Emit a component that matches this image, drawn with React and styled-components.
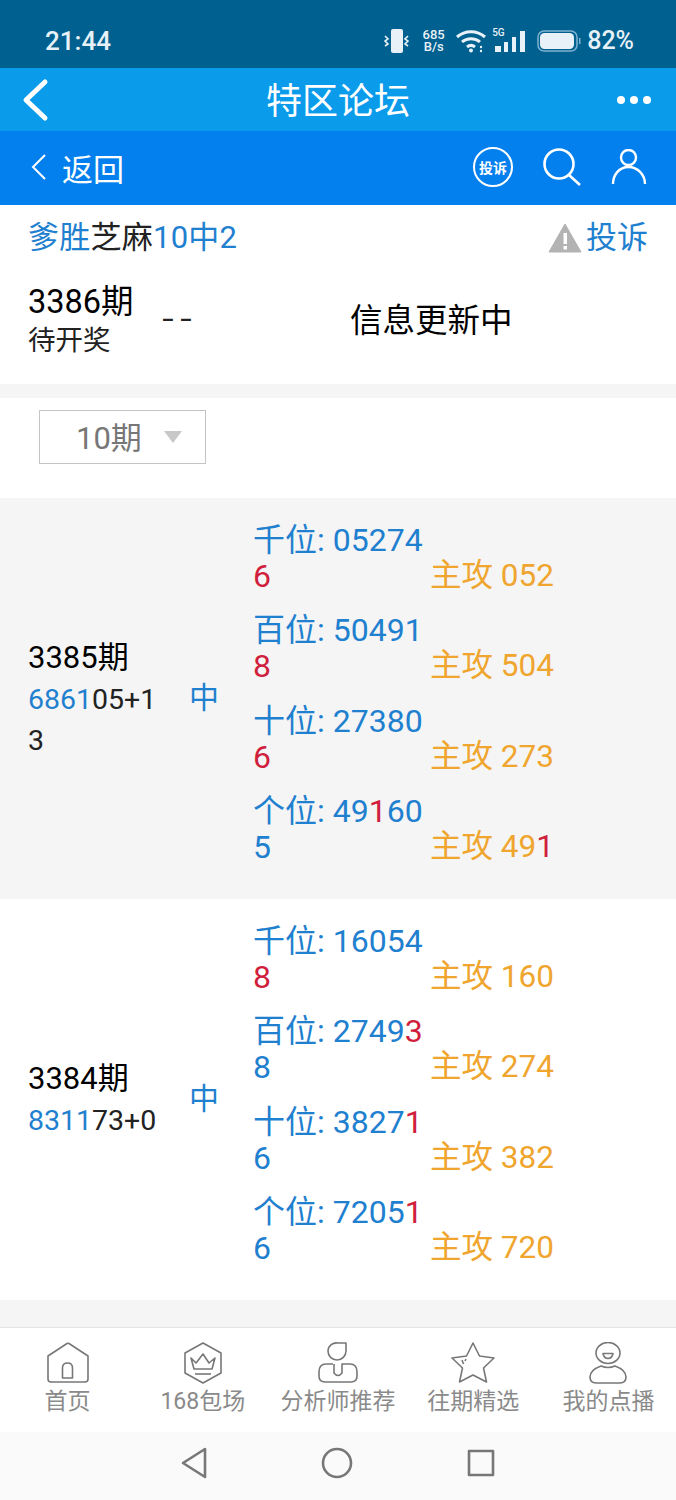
import styled, { createGlobalStyle } from "styled-components";

const BLUE = "#1f80cf";
const RED = "#d01f3c";
const ORANGE = "#efa52e";

const records = [
  {
    issue: "3385期",
    hit: "6861",
    rest: "05+13",
    tint: "#f5f5f5",
    rows: [
      { label: "千位", nums: [["05274"], ["6", 1]], aim: [["052"]] },
      { label: "百位", nums: [["50491"], ["8", 1]], aim: [["504"]] },
      { label: "十位", nums: [["27380"], ["6", 1]], aim: [["273"]] },
      { label: "个位", nums: [["49"], ["1", 1], ["605"]], aim: [["49"], ["1", 1]] },
    ],
  },
  {
    issue: "3384期",
    hit: "8311",
    rest: "73+0",
    tint: "#ffffff",
    rows: [
      { label: "千位", nums: [["16054"], ["8", 1]], aim: [["160"]] },
      { label: "百位", nums: [["2749"], ["3", 1], ["8"]], aim: [["274"]] },
      { label: "十位", nums: [["3827"], ["1", 1], ["6"]], aim: [["382"]] },
      { label: "个位", nums: [["7205"], ["1", 1], ["6"]], aim: [["720"]] },
    ],
  },
];

const App = () => {
  return (
    <Page>
      <GlobalStyle />
      <StatusBar>
        <Clock>21:44</Clock>
        <StatusIcons>
          <svg width="29" height="24" viewBox="0 0 29 24" fill="none">
            <rect x="9" y="0" width="12" height="24" rx="2" fill="#e8f1f7" />
            <path d="M3 7l3 3-3 2 3 3-3 2M26 7l-3 3 3 2-3 3 3 2" stroke="#e8f1f7" strokeWidth="1.600" />
          </svg>
          <Speed>
            685
            <br />
            B/s
          </Speed>
          <svg width="30" height="24" viewBox="0 0 30 24" fill="none" stroke="#e8f1f7" strokeWidth="3">
            <path d="M1 8c8-7 20-7 28 0M6 13c5-4.500 13-4.500 18 0M11 18c2.500-2 5.500-2 8 0" />
            <circle cx="15" cy="21.500" r="2" fill="#e8f1f7" stroke="none" />
            <circle cx="25" cy="18" r="1.200" fill="#e8f1f7" stroke="none" />
            <circle cx="25" cy="22" r="1.200" fill="#e8f1f7" stroke="none" />
          </svg>
          <SignalIcon>
            <svg width="35" height="24" viewBox="0 0 35 24" fill="#e8f1f7">
              <rect x="3" y="17" width="6" height="6" />
              <rect x="12" y="13" width="4" height="10" />
              <rect x="20" y="8" width="4" height="15" />
              <rect x="28" y="2" width="5" height="21" />
            </svg>
            <FiveG>5G</FiveG>
          </SignalIcon>
          <svg width="44" height="24" viewBox="0 0 44 24" fill="none">
            <rect x="1" y="2" width="39" height="20" rx="6" stroke="#7fb2d0" strokeWidth="1.500" />
            <rect x="3" y="4" width="34" height="16" rx="4.500" fill="#e8f1f7" />
            <rect x="42" y="9" width="1.500" height="6" fill="#7fb2d0" />
          </svg>
          <Battery>82%</Battery>
        </StatusIcons>
      </StatusBar>

      <TitleBar>
        <svg width="32" height="44" viewBox="0 0 32 44" fill="none" stroke="#fff" strokeWidth="5" strokeLinecap="round" strokeLinejoin="round">
          <path d="M26 4L7 22l19 18" />
        </svg>
        <Title>特区论坛</Title>
        <svg width="40" height="12" viewBox="0 0 40 12" fill="#fff">
          <circle cx="8" cy="6" r="4" />
          <circle cx="21" cy="6" r="4" />
          <circle cx="34" cy="6" r="4" />
        </svg>
      </TitleBar>

      <SubNav>
        <BackLink>
          <svg width="18" height="28" viewBox="0 0 18 28" fill="none" stroke="#fff" strokeWidth="2">
            <path d="M15 2L3 14l12 12" />
          </svg>
          <span>返回</span>
        </BackLink>
        <NavIcons>
          <ReportBadge>投诉</ReportBadge>
          <svg width="38" height="38" viewBox="0 0 38 38" fill="none" stroke="#fff" strokeWidth="2.600">
            <circle cx="16" cy="16" r="14.500" />
            <path d="M26 27l11 10" />
          </svg>
          <svg width="36" height="36" viewBox="0 0 36 36" fill="none" stroke="#fff" strokeWidth="2.400">
            <circle cx="17.500" cy="8.500" r="7.500" />
            <path d="M2 35c0-9 6-17 15.500-17S34 26 34 35" />
          </svg>
        </NavIcons>
      </SubNav>

      <InfoCard>
        <InfoHead>
          <PlanName>
            爹胜<Dark>芝麻</Dark>10中2
          </PlanName>
          <Complain>
            <svg width="34" height="30" viewBox="0 0 34 30">
              <path d="M17 1L33 29H1z" fill="#b3b3b3" stroke="#b3b3b3" strokeLinejoin="round" />
              <rect x="15.500" y="10" width="3.500" height="11" fill="#fff" />
              <rect x="15.500" y="23" width="3.500" height="3.500" fill="#fff" />
            </svg>
            投诉
          </Complain>
        </InfoHead>
        <NextRow>
          <NextIssue>
            <NextNo>3386期</NextNo>
            <Pending>待开奖</Pending>
          </NextIssue>
          <Dashes>--</Dashes>
          <Updating>信息更新中</Updating>
        </NextRow>
      </InfoCard>

      <FilterRow>
        <PeriodSelect>
          <span>10期</span>
          <Caret />
        </PeriodSelect>
      </FilterRow>

      {records.map((record) => (
        <Record key={record.issue} $tint={record.tint}>
          <IssueCell>
            <IssueNo>{record.issue}</IssueNo>
            <Draw>
              <Hit>{record.hit}</Hit>
              {record.rest}
            </Draw>
          </IssueCell>
          <Result>中</Result>
          <Picks>
            {record.rows.map((row) => (
              <Pick key={row.label}>
                <Digits>
                  {row.label}:{" "}
                  {row.nums.map(([text, red], i) => (
                    <Part key={i} $red={red}>
                      {text}
                    </Part>
                  ))}
                </Digits>
                <Aim>
                  主攻{" "}
                  {row.aim.map(([text, red], i) => (
                    <Part key={i} $red={red}>
                      {text}
                    </Part>
                  ))}
                </Aim>
              </Pick>
            ))}
          </Picks>
        </Record>
      ))}

      <Spacer />

      <TabBar>
        <Tab>
          <TabIcon width="42" height="42" viewBox="0 0 42 42">
            <path d="M1 14L20 1.500q1-.5 2 0L41 14v23q0 3-3 3H4q-3 0-3-3z" />
            <path d="M15.500 36V26q0-5 5-5t5 5v10z" />
          </TabIcon>
          <TabLabel>首页</TabLabel>
        </Tab>
        <Tab>
          <TabIcon width="40" height="42" viewBox="0 0 40 42">
            <path d="M20 1l18 10v20L20 41 2 31V11z" />
            <path d="M8 16l5 5 7-9 6 9 6-5-3 11H11z" />
            <path d="M12 32h16" />
          </TabIcon>
          <TabLabel>168包场</TabLabel>
        </Tab>
        <Tab>
          <TabIcon width="40" height="42" viewBox="0 0 40 42">
            <path d="M20 1h8v8a9 9 0 1 1-18 0 8.500 8.500 0 0 1 10-8z" />
            <path d="M15 22H8q-7 0-7 8v4q0 6 6 6h26q6 0 6-6v-4q0-8-7-8h-8v9q-4 5-8 0v-9" />
          </TabIcon>
          <TabLabel>分析师推荐</TabLabel>
        </Tab>
        <Tab>
          <TabIcon width="44" height="42" viewBox="0 0 44 42">
            <path d="M22 1l6.500 13 14.500 2-10.500 10 3 14L22 33 8.500 40l3-14L1 16l14.500-2z" />
            <path d="M11 18l1.500 4M15 17l-1 2" />
          </TabIcon>
          <TabLabel>往期精选</TabLabel>
        </Tab>
        <Tab>
          <TabIcon width="38" height="42" viewBox="0 0 38 42">
            <ellipse cx="19" cy="11" rx="12" ry="10.500" />
            <path d="M14 11.500h10q-1 5-5 5t-5-5z" />
            <path d="M12 24Q1 28 1 35q0 6 6 6h24q6 0 6-6 0-7-11-11-7 3-14 0z" />
          </TabIcon>
          <TabLabel>我的点播</TabLabel>
        </Tab>
      </TabBar>

      <NavBar>
        <svg width="28" height="32" viewBox="0 0 28 32" fill="none" stroke="#777" strokeWidth="2.600" strokeLinejoin="round">
          <path d="M25 2v28L3 16z" />
        </svg>
        <svg width="32" height="32" viewBox="0 0 32 32" fill="none" stroke="#777" strokeWidth="2.600">
          <circle cx="16" cy="16" r="14" />
        </svg>
        <svg width="30" height="30" viewBox="0 0 30 30" fill="none" stroke="#777" strokeWidth="2.600" strokeLinejoin="round">
          <rect x="3" y="3" width="24" height="24" />
        </svg>
      </NavBar>
    </Page>
  );
};

const GlobalStyle = createGlobalStyle`
  html, body {
    margin: 0;
    padding: 0;
    background: #fff;
  }
  body {
    font-family: Roboto, "Noto Sans CJK SC", sans-serif;
  }
`;

const Page = styled.div`
  width: 676px;
  height: 1500px;
  display: flex;
  flex-direction: column;
  overflow: hidden;
  background: #f5f5f5;
`;

const StatusBar = styled.div`
  height: 68px;
  flex: none;
  box-sizing: border-box;
  padding: 13px 42px 0 45px;
  background: #00608f;
  color: #e8f1f7;
  display: flex;
  align-items: center;
  justify-content: space-between;
`;

const Clock = styled.div`
  font-size: 26px;
  font-weight: 500;
`;

const StatusIcons = styled.div`
  display: flex;
  align-items: center;
  gap: 10px;
`;

const Speed = styled.div`
  width: 25px;
  font-size: 13px;
  line-height: 12px;
  font-weight: 500;
  text-align: center;
`;

const SignalIcon = styled.div`
  position: relative;
  height: 24px;
  margin-left: -4px;
`;

const FiveG = styled.span`
  position: absolute;
  top: -2px;
  left: 0;
  font-size: 10px;
  line-height: 12px;
  font-weight: 500;
`;

const Battery = styled.div`
  font-size: 25px;
  font-weight: 500;
  margin-left: -4px;
`;

const TitleBar = styled.div`
  height: 63px;
  flex: none;
  box-sizing: border-box;
  padding: 0 23px 0 19px;
  background: #0a9beb;
  display: flex;
  align-items: center;
  justify-content: space-between;
`;

const Title = styled.div`
  color: #fff;
  font-size: 36px;
  margin-left: 12px;
  padding-bottom: 4px;
`;

const SubNav = styled.div`
  height: 74px;
  flex: none;
  box-sizing: border-box;
  padding: 0 29px 2px 30px;
  background: #0480ee;
  display: flex;
  align-items: center;
  justify-content: space-between;
`;

const BackLink = styled.div`
  display: flex;
  align-items: center;
  gap: 14px;
  color: #fff;
  font-size: 31px;
`;

const NavIcons = styled.div`
  display: flex;
  align-items: center;
  gap: 30px;
`;

const ReportBadge = styled.div`
  width: 40px;
  height: 40px;
  box-sizing: border-box;
  border: 2.500px solid #fff;
  border-radius: 50%;
  color: #fff;
  font-size: 14px;
  font-weight: 700;
  display: flex;
  align-items: center;
  justify-content: center;
`;

const InfoCard = styled.div`
  height: 179px;
  flex: none;
  box-sizing: border-box;
  padding: 12px 28px 0;
  background: #fff;
`;

const InfoHead = styled.div`
  display: flex;
  align-items: center;
  justify-content: space-between;
  color: ${BLUE};
  font-size: 31px;
  line-height: 42px;
`;

const PlanName = styled.div`
  letter-spacing: 0.250px;
`;

const Dark = styled.span`
  color: #222;
`;

const Complain = styled.div`
  display: flex;
  align-items: center;
  gap: 4px;
`;

const NextRow = styled.div`
  display: flex;
  align-items: center;
  margin-top: 22px;
`;

const NextIssue = styled.div`
  width: 134px;
`;

const IssueNo = styled.div`
  color: #000;
  font-size: 31px;
  line-height: 42px;
`;

const NextNo = styled(IssueNo)`
  font-size: 32.500px;
`;

const Pending = styled.div`
  color: #222;
  font-size: 27.500px;
  line-height: 36px;
`;

const Dashes = styled.div`
  width: 188px;
  margin-bottom: 4px;
  color: #222;
  font-size: 42px;
  font-weight: 300;
  letter-spacing: 6px;
`;

const Updating = styled.div`
  margin-bottom: 6px;
  color: #000;
  font-size: 32.500px;
`;

const FilterRow = styled.div`
  height: 100px;
  flex: none;
  box-sizing: border-box;
  margin-top: 14px;
  padding-top: 12px;
  background: #fff;
  padding-left: 39px;
`;

const PeriodSelect = styled.div`
  width: 167px;
  height: 54px;
  box-sizing: border-box;
  border: 1.500px solid #c4c4c4;
  padding: 0 0 4px 36px;
  display: flex;
  align-items: center;
  gap: 22px;
  color: #777;
  font-size: 31px;
`;

const Caret = styled.div`
  width: 0;
  height: 0;
  margin-top: 4px;
  border-left: 9px solid transparent;
  border-right: 9px solid transparent;
  border-top: 12px solid #c8c8c8;
`;

const Record = styled.div`
  height: 401px;
  flex: none;
  box-sizing: border-box;
  padding-left: 28px;
  background: ${(props) => props.$tint};
  display: flex;
  align-items: center;
`;

const IssueCell = styled.div`
  width: 132px;
`;

const Draw = styled.div`
  color: #222;
  font-size: 28.500px;
  line-height: 41px;
  word-break: break-all;
`;

const Hit = styled.span`
  color: ${BLUE};
`;

const Result = styled.div`
  width: 93px;
  padding: 0 0 8px 29px;
  box-sizing: border-box;
  color: ${BLUE};
  font-size: 30px;
`;

const Picks = styled.div`
  display: flex;
  flex-direction: column;
  gap: 18.500px;
  padding-bottom: 10px;
`;

const Pick = styled.div`
  display: flex;
  align-items: flex-end;
  font-size: 32px;
  line-height: 36px;
`;

const Digits = styled.div`
  width: 177px;
  color: ${BLUE};
  word-break: break-all;
`;

const Aim = styled.div`
  color: ${ORANGE};
  font-size: 31.500px;
`;

const Part = styled.span`
  color: ${(props) => (props.$red ? RED : "inherit")};
`;

const Spacer = styled.div`
  flex: 1;
  background: #f5f5f5;
`;

const TabBar = styled.div`
  height: 105px;
  flex: none;
  box-sizing: border-box;
  border-top: 1px solid #e4e4e4;
  padding-top: 14px;
  background: #fff;
  display: grid;
  grid-template-columns: repeat(5, 1fr);
`;

const Tab = styled.div`
  display: flex;
  flex-direction: column;
  align-items: center;
  gap: 3px;
`;

const TabIcon = styled.svg`
  fill: none;
  stroke: #777;
  stroke-width: 1.600px;
  stroke-linejoin: round;
`;

const TabLabel = styled.div`
  color: #8a8a8a;
  font-size: 23px;
  line-height: 30px;
  white-space: nowrap;
`;

const NavBar = styled.div`
  height: 68px;
  flex: none;
  box-sizing: border-box;
  padding: 0 180px 6px 180px;
  background: #fafafa;
  display: flex;
  align-items: center;
  justify-content: space-between;
`;

export default App;
